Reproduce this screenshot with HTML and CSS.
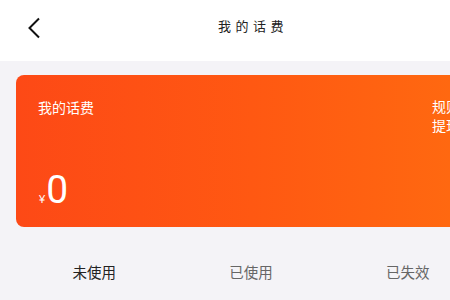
FILE: index.html
```html
<!DOCTYPE html>
<html lang="zh">
<head>
<meta charset="utf-8">
<link rel="stylesheet" href="styles.css">
</head>
<body>
<div class="page">
  <header class="nav">
    <svg class="back" width="14" height="22" viewBox="0 0 14 22"><path d="M12 1.5 L2.5 11 L12 20.5" fill="none" stroke="#111" stroke-width="2"/></svg>
    <div class="title">我的话费</div>
  </header>
  <main class="body">
    <section class="card">
      <div class="card-top">
        <div class="card-label">我的话费</div>
        <div class="card-links"><span>规则</span><span>提现</span></div>
      </div>
      <div class="amount"><span class="yen">¥</span><span class="num">0</span></div>
    </section>
    <nav class="tabs">
      <div class="tab active">未使用</div>
      <div class="tab">已使用</div>
      <div class="tab">已失效</div>
    </nav>
  </main>
</div>
</body>
</html>
```
FILE: styles.css
```css
html, body { margin: 0; padding: 0; }
body {
  width: 450px;
  height: 300px;
  overflow: hidden;
  background: #f4f3f7;
  font-family: "Noto Sans CJK SC", "Noto Sans", sans-serif;
}
.page { width: 502px; }
.nav {
  height: 61px;
  background: #fff;
  display: flex;
  align-items: center;
  position: relative;
}
.back { margin-left: 27px; margin-top: -6px; }
.title {
  position: absolute;
  left: 218px;
  top: 16px;
  font-size: 13px;
  letter-spacing: 4.5px;
  color: #222;
}
.body { padding: 14px 16px 0; }
.card {
  height: 152px;
  border-radius: 8px;
  background: linear-gradient(90deg, #fd4916 0%, #ff5812 50%, #ff6b10 100%);
  color: #fff;
  padding: 0 22px;
  display: flex;
  flex-direction: column;
  justify-content: space-between;
  box-sizing: border-box;
}
.card-top {
  display: flex;
  justify-content: space-between;
  padding-top: 22px;
}
.card-label { font-size: 14px; line-height: 20px; }
.card-links {
  display: flex;
  flex-direction: column;
  font-size: 14px;
  line-height: 19px;
  margin-right: 4px;
}
.amount {
  display: flex;
  align-items: baseline;
  padding-bottom: 17px;
  margin-left: 1px;
}
.yen { font-size: 11px; font-family: "Liberation Sans", sans-serif; margin-right: 1px; }
.num { font-size: 39px; line-height: 40px; font-family: Roboto, sans-serif; font-weight: 400; }
.tabs {
  display: grid;
  grid-template-columns: repeat(3, 1fr);
  margin-top: 34px;
}
.tab {
  text-align: center;
  font-size: 14.5px;
  color: #666;
  line-height: 22px;
}
.tab.active { color: #222; }
```
